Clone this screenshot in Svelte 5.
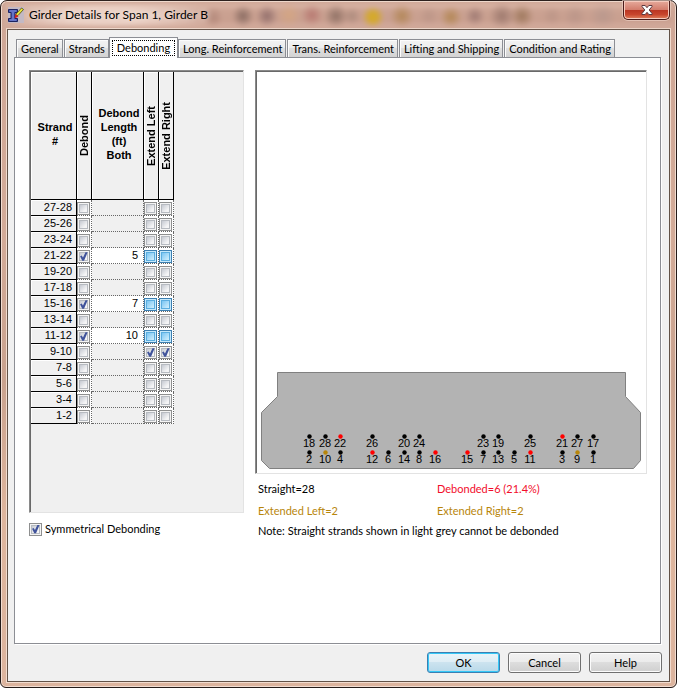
<script>
  const tabs = ['General', 'Strands', 'Debonding', 'Long. Reinforcement', 'Trans. Reinforcement', 'Lifting and Shipping', 'Condition and Rating'];
  let active = $state('Debonding');
  let symmetrical = $state(true);

  const names = ['27-28', '25-26', '23-24', '21-22', '19-20', '17-18', '15-16', '13-14', '11-12', '9-10', '7-8', '5-6', '3-4', '1-2'];
  const lengths = { '21-22': 5, '15-16': 7, '11-12': 10 };
  let rows = $state(names.map((name) => ({
    name,
    length: lengths[name] ?? '',
    debond: name in lengths,
    hot: name in lengths,
    left: name === '9-10',
    right: name === '9-10'
  })));

  const red = '#ff0000';
  const gold = '#b8860b';
  const upper = [[18, 52], [28, 68], [22, 83, red], [26, 115], [20, 147], [24, 162], [23, 226], [19, 241], [25, 273], [21, 305, red], [27, 320], [17, 336]];
  const lower = [[2, 52], [10, 68, gold], [4, 83], [12, 115, red], [6, 131], [14, 147], [8, 162], [16, 178, red], [15, 210, red], [7, 226], [13, 241], [5, 257], [11, 273, red], [3, 305], [9, 320, gold], [1, 336]];
  const strands = [...upper.map((s) => [...s.slice(0, 2), 364, s[2]]), ...lower.map((s) => [...s.slice(0, 2), 380, s[2]])];
</script>

<div class="window">
  <header class="titlebar">
    <div class="glass" aria-hidden="true"></div>
    <svg class="app-icon" width="16" height="16" viewBox="0 0 16 16" aria-hidden="true">
      <rect width="16" height="16" fill="#c3b9c4" />
      <path d="M.5 2.500h9v3h-2.500v6h2.500v3h-9v-3h2.500v-6h-2.500z" fill="#4c5cb8" stroke="#1d235f" />
      <path d="M2 4h6M5 5v8M2 13h6" stroke="#7d8bd6" fill="none" />
      <path d="M7.500 9.500l.5-2.500 5.500-6 2 1.500-5.500 6z" fill="#e9e63a" stroke="#4a4514" stroke-width=".8" />
      <path d="M6.500 11.500l1-4.500 3 2.500z" fill="#d42020" />
    </svg>
    <h1>Girder Details for Span 1, Girder B</h1>
    <button class="close" aria-label="Close">
      <svg width="12" height="10" viewBox="0 0 12 10" aria-hidden="true">
        <path d="M1 .5h3.200L6 2.700 7.800.5H11v1L8.200 5 11 8.500v1H7.800L6 7.300 4.200 9.500H1v-1L3.800 5 1 1.500z" fill="#fff" stroke="#5b3a40" />
      </svg>
    </button>
  </header>

  <main class="client">
    <div class="tabs" role="tablist">
      {#each tabs as tab}
        <button role="tab" class="tab" class:selected={tab === active} aria-selected={tab === active} onclick={() => (active = tab)}>
          <span>{tab}</span>
        </button>
      {/each}
    </div>

    <section class="page" role="tabpanel" aria-label={active}>
      <div class="left">
        <div class="grid sunken">
          <table>
            <colgroup>
              <col class="c-name" /><col class="c-check" /><col class="c-length" /><col class="c-check" /><col class="c-check" />
            </colgroup>
            <thead>
              <tr>
                <th scope="col">Strand<br />#</th>
                <th scope="col"><span class="vertical">Debond</span></th>
                <th scope="col">Debond<br />Length<br />(ft)<br />Both</th>
                <th scope="col"><span class="vertical">Extend Left</span></th>
                <th scope="col"><span class="vertical">Extend Right</span></th>
              </tr>
            </thead>
            <tbody>
              {#each rows as row}
                <tr class:hot={row.hot}>
                  <th scope="row">{row.name}</th>
                  <td class="check"><input type="checkbox" aria-label="Debond {row.name}" bind:checked={row.debond} /></td>
                  <td class="length">{row.length}</td>
                  <td class="check extend"><input type="checkbox" aria-label="Extend left {row.name}" bind:checked={row.left} /></td>
                  <td class="check extend"><input type="checkbox" aria-label="Extend right {row.name}" bind:checked={row.right} /></td>
                </tr>
              {/each}
            </tbody>
          </table>
        </div>
        <label class="symmetrical"><input type="checkbox" bind:checked={symmetrical} />Symmetrical Debonding</label>
      </div>

      <div class="right">
        <div class="drawing sunken">
          <svg viewBox="0 0 389 401" role="img" aria-label="Girder section with strand positions">
            <path class="girder" d="M20.500 300.500H368.500V324.500L383.500 340.500V388.500L376.500 396.500H12.500L4.500 388.500V340.500L20.500 324.500Z" />
            {#each strands as [number, x, y, color]}
              <circle cx={x + 0.5} cy={y + 0.5} r="2.200" fill={color ?? '#000'} />
              <text {x} y={y + 11}>{number}</text>
            {/each}
          </svg>
        </div>
        <div class="summary">
          <span>Straight=28</span>
          <span class="red">Debonded=6 (21.4%)</span>
          <span class="gold">Extended Left=2</span>
          <span class="gold">Extended Right=2</span>
        </div>
        <p>Note: Straight strands shown in light grey cannot be debonded</p>
      </div>
    </section>

    <footer>
      <button class="push default">OK</button>
      <button class="push">Cancel</button>
      <button class="push">Help</button>
    </footer>
  </main>
</div>

<style>
  :global(body) {
    margin: 0;
    background: #fff;
  }
  * {
    box-sizing: border-box;
  }
  .window {
    display: flex;
    flex-direction: column;
    min-height: calc(100vh - 1px);
    margin-right: 5px;
    padding: 0 6px 5px;
    border: 1px solid #241a18;
    border-radius: 7px 7px 6px 6px;
    background: linear-gradient(#cfa797, #d3ab98 35%, #c9a28e 55%, #deb59d 75%, #dcb49e);
    box-shadow: inset 0 0 0 1px #f2ddd1;
    font: 11px/14px Lato, "Liberation Sans", sans-serif;
    color: #000;
  }
  button {
    font: inherit;
    color: inherit;
  }
  .titlebar {
    position: relative;
    display: flex;
    align-items: center;
    height: 28px;
    padding-left: 1px;
    gap: 5px;
  }
  .glass {
    position: absolute;
    inset: 3px -2px;
    filter: blur(2px);
    background:
      radial-gradient(ellipse 120px 18px at 100px 12px, #f3ddd2cc 40%, transparent),
      radial-gradient(circle at 208px 13px, #8d5d5088, transparent 10px),
      radial-gradient(circle at 238px 12px, #68504aaa, transparent 11px),
      radial-gradient(circle at 262px 12px, #76565aaa, transparent 11px),
      radial-gradient(circle at 284px 11px, #d9a87caa, transparent 12px),
      radial-gradient(circle at 307px 11px, #a7555588, transparent 11px),
      radial-gradient(circle at 331px 12px, #725a50aa, transparent 12px),
      radial-gradient(circle at 347px 12px, #806b6066, transparent 9px),
      radial-gradient(circle at 368px 13px, #d4a92c 4px, transparent 11px),
      radial-gradient(circle at 397px 12px, #a77a3baa, transparent 12px),
      radial-gradient(circle at 424px 12px, #a7857a66, transparent 10px),
      radial-gradient(circle at 446px 13px, #a87a35aa, transparent 11px),
      radial-gradient(circle at 470px 12px, #81605f99, transparent 10px),
      radial-gradient(circle at 497px 12px, #76575088, transparent 13px),
      radial-gradient(circle at 517px 12px, #77552f88, transparent 12px),
      radial-gradient(circle at 547px 12px, #a7857a66, transparent 10px),
      radial-gradient(circle at 570px 12px, #9d807a55, transparent 12px),
      radial-gradient(circle at 598px 12px, #a18c8866, transparent 14px),
      linear-gradient(#dcb8a9, #cba292 30%, #c99f8f 80%, #d5ada0);
  }
  .app-icon,
  h1 {
    position: relative;
  }
  h1 {
    margin: 0;
    font: 12px/16px Lato, "Open Sans", sans-serif;
    text-shadow: 0 0 6px #fff9;
  }
  .close {
    position: relative;
    display: flex;
    align-items: center;
    justify-content: center;
    align-self: flex-start;
    width: 47px;
    height: 19px;
    margin-left: auto;
    padding: 0;
    border: 1px solid #4b1c1a;
    border-top: 0;
    border-radius: 0 0 5px 5px;
    background: linear-gradient(#e6aa9c, #d37d6c 48%, #b93522 50%, #c8452d 75%, #e08360);
    box-shadow: inset 0 0 0 1px #f6cabd, 0 0 0 1px #f0d5ca99;
  }
  .client {
    flex: 1;
    display: flex;
    flex-direction: column;
    padding: 7px 7px 8px 6px;
    border: 1px solid #625247;
    background: #f0f0f0;
    box-shadow: 0 0 0 1px #f1dccf;
  }
  .tabs {
    display: flex;
    align-items: flex-end;
    height: 20px;
    padding-left: 2px;
  }
  .tab {
    height: 18px;
    margin-right: 1px;
    padding: 0 3px 0 4px;
    border: 1px solid #8c8e94;
    border-bottom: 0;
    background: linear-gradient(#f3f3f3, #ececec 48%, #dfdfdf 50%, #d3d3d3);
    box-shadow: inset 1px 1px #fcfcfc;
    white-space: nowrap;
  }
  .tab.selected {
    position: relative;
    z-index: 1;
    height: 21px;
    margin: 0 0 -1px -1px;
    padding: 1px 2px 2px;
    background: #fff;
  }
  .selected span {
    display: block;
    padding: 0 4px;
    border: 1px dotted #000;
  }
  .page {
    flex: 1;
    display: flex;
    gap: 11px;
    margin-right: 1px;
    padding: 12px 13px 20px 14px;
    border: 1px solid #8c8e94;
    background: #fff;
    box-shadow: 1px 1px #fff;
  }
  .sunken {
    border: 1px solid;
    border-color: #8a8a8a #e3e3e3 #e3e3e3 #8a8a8a;
    box-shadow: inset 1px 1px #696969;
    padding: 1px 0 0 1px;
  }
  .left {
    flex: 0 0 215px;
  }
  .grid {
    height: 443px;
    background: #f0f0f0;
  }
  table {
    width: 143px;
    table-layout: fixed;
    border-collapse: separate;
    border-spacing: 0;
    font-family: "Liberation Sans", Arial, sans-serif;
  }
  .c-name { width: 46px; }
  .c-check { width: 15px; }
  .c-length { width: 52px; }
  th,
  td {
    padding: 0;
    border-right: 1px solid #000;
    border-bottom: 1px solid #000;
    box-shadow: inset 1px 1px #fff;
  }
  thead th {
    height: 128px;
    padding: 0 0 3px 3px;
    font-weight: bold;
    vertical-align: middle;
  }
  thead th:has(.vertical) {
    padding: 0;
  }
  .vertical {
    display: block;
    width: 14px;
    writing-mode: vertical-rl;
    transform: rotate(180deg);
    line-height: 14px;
    text-align: center;
    white-space: nowrap;
  }
  tbody th,
  td {
    height: 16px;
    line-height: 15px;
    text-align: right;
    vertical-align: top;
  }
  tbody th {
    padding-right: 4px;
    font-weight: normal;
  }
  td {
    border-right: 1px dotted #666;
    border-bottom: 1px dotted #666;
    box-shadow: none;
  }
  .length {
    padding-right: 5px;
  }
  .check,
  .hot .length {
    background: #fff;
  }
  .check {
    padding-top: 2px;
    line-height: 0;
    text-align: left;
  }
  input {
    position: relative;
    flex: none;
    appearance: none;
    width: 13px;
    height: 13px;
    margin: 0;
    border: 1px solid #8e8f8f;
    background: linear-gradient(135deg, #c5c9d1, #f5f5f6 75%) content-box, #f4f4f4;
    padding: 2px;
    box-shadow: inset 0 0 0 1px #f4f4f4, inset 0 0 0 2px #b7bbc1;
  }
  .check input {
    display: block;
  }
  .hot .extend input {
    border-color: #3c7fb1;
    background: linear-gradient(135deg, #79c5f3, #d3f0fd) content-box, #d8f1fd;
    box-shadow: inset 0 0 0 1px #c5e9fc, inset 0 0 0 2px #5baee0;
  }
  input:checked::before {
    content: "";
    position: absolute;
    inset: 1px;
    background: #40539b;
    clip-path: polygon(12% 48%, 30% 40%, 44% 62%, 72% 4%, 96% 4%, 56% 96%, 36% 96%);
  }
  .symmetrical {
    display: flex;
    align-items: center;
    gap: 3px;
    margin-top: 9px;
  }
  .right {
    flex: 1;
    min-width: 0;
  }
  .drawing svg {
    display: block;
    width: 100%;
  }
  .girder {
    fill: #b3b3b3;
    stroke: #808080;
  }
  text {
    font: 11px "Liberation Sans", Arial, sans-serif;
    text-anchor: middle;
  }
  .summary {
    display: grid;
    grid-template-columns: 179px 1fr;
    row-gap: 8px;
    margin: 8px 0 6px 3px;
  }
  p {
    margin: 0 0 0 3px;
  }
  .red { color: #f20d2b; }
  .gold { color: #b8860b; }
  footer {
    display: flex;
    justify-content: flex-end;
    gap: 8px;
    padding-top: 8px;
  }
  .push {
    width: 73px;
    height: 21px;
    padding: 0;
    border: 1px solid #707070;
    border-radius: 3px;
    background: linear-gradient(#f2f2f2, #ebebeb 48%, #dddddd 50%, #cfcfcf);
    box-shadow: inset 0 0 0 1px #fcfcfc;
  }
  .default {
    border-color: #3c7fb1;
    background: linear-gradient(#eaf4f9, #deedf5 48%, #cce3ef 50%, #b9d9e9);
    box-shadow: inset 0 0 0 1px #35c8f7;
  }
</style>
